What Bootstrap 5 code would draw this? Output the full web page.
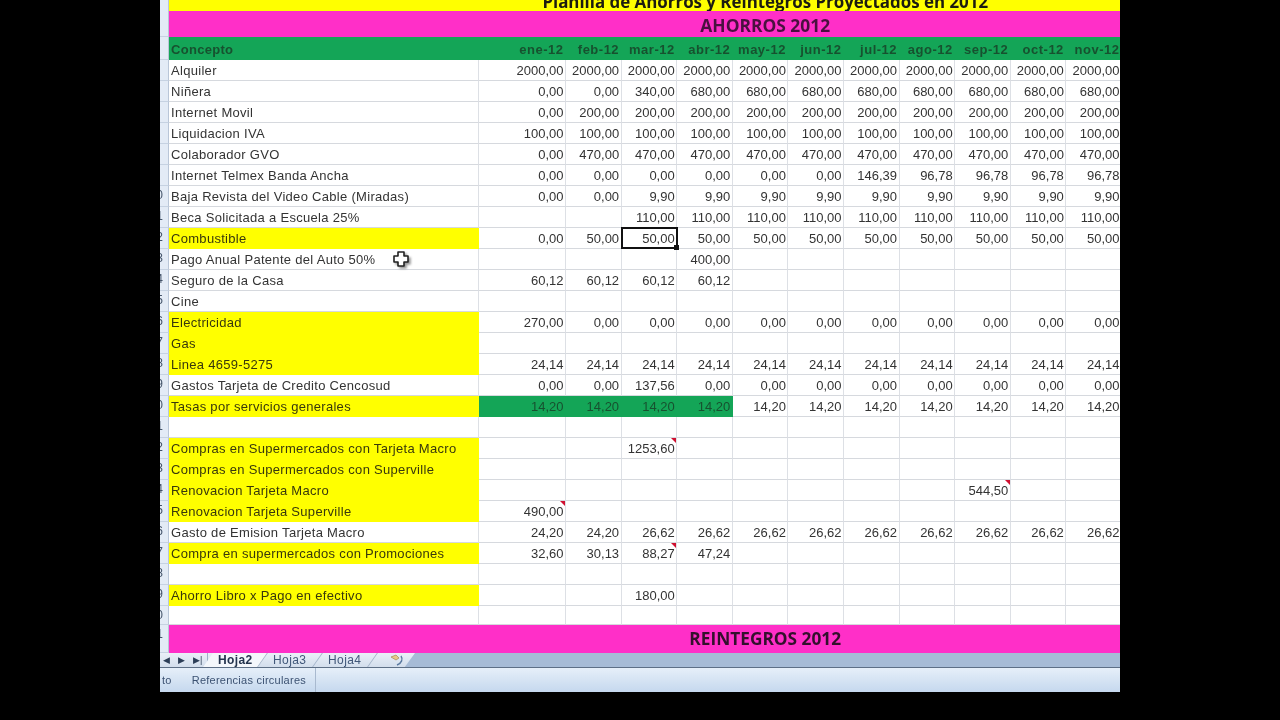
<!DOCTYPE html>
<html lang="es">
<head>
    <meta charset="UTF-8">
    <title>Planilla de Ahorros</title>
    <link href="https://cdn.jsdelivr.net/npm/bootstrap@5.3.0/dist/css/bootstrap.min.css" rel="stylesheet">
    <style>
        body { background: #000; overflow: hidden; }
        .sheet-wrap { width: 960px; height: 692px; overflow: hidden; filter: blur(.5px); background: #fff; }
        .sheet-table { width: 962px; table-layout: fixed; border-collapse: separate; border-spacing: 0; margin: 0; font: 13px "Liberation Sans", Arial, sans-serif; color: #333; }
        .sheet-table td { height: 21px; padding: 1px 1.5px 0 2px; border-right: 1px solid #dde0e5; border-bottom: 1px solid #d6d9de; line-height: 19px; text-align: right; white-space: nowrap; overflow: hidden; background: #fff; color: #333; }
        .sheet-table td.concept { text-align: left; padding-left: 2px; letter-spacing: .3px; }
        .sheet-table td.gutter { padding: 0; background: #e3ebf6; border-right: 1px solid #b9c6d8; border-bottom-color: #c6d2e2; color: #44546a; font-size: 12px; }
        .gutter-num { display: flex; justify-content: flex-end; width: 9px; padding-right: 6px; overflow: hidden; }
        .sheet-table td.fill-y { background: #ffff00; color: #38380c; border-color: #ffff00; }
        .sheet-table td.fill-g { background: #14a557; color: #17512f; border-color: #14a557; }
        .sheet-table td.fill-m { background: #ff2fc8; border-color: #ff2fc8; }
        .sheet-table .title-row td { height: 11px; line-height: 11px; border-bottom: 0; padding-top: 0; }
        .title-clip { height: 11px; overflow: hidden; }
        .title-text { display: block; margin-top: -7px; font: 700 16.9px/18px "Open Sans", "Liberation Sans", sans-serif; color: #1c1c10; padding-left: 240px; text-align: center; }
        .sheet-table .band-row td { height: 26px; padding-top: 0; }
        .sheet-table .foot-band td { height: 28px; padding-top: 0; }
        .band-text { padding: 4px 0 0 240px; text-align: center; font: 700 17.4px/20px "Open Sans", "Liberation Sans", sans-serif; color: #4a1040; }
        .foot-band .band-text { color: #33102c; font-size: 17.3px; }
        .sheet-table .head-row td { height: 23px; padding-top: 3px; font-weight: 700; letter-spacing: .5px; color: #17512f; }
        .sheet-table .head-row td.concept { letter-spacing: .3px; }
        .sheet-table .last-row td { height: 19px; line-height: 18px; padding-top: 0; }
        .cell-note { position: relative; overflow: visible !important; }
        .cell-note::after { content: ""; position: absolute; top: 0; right: 0; border-top: 5px solid #d01030; border-left: 5px solid transparent; }
        .cell-sel { position: relative; overflow: visible !important; }
        .sel-box { position: absolute; left: -1px; top: -1px; right: -2px; bottom: -1px; border: 2px solid #111; pointer-events: none; }
        .sel-box::after { content: ""; position: absolute; right: -3px; bottom: -3px; width: 5px; height: 5px; background: #111; }
        .xl-cursor { position: absolute; left: 232px; top: 250px; width: 18px; height: 18px; filter: drop-shadow(2px 2px 1px #999); }
        .tab-bar { height: 15px; background: #a6bbd6; border-bottom: 1px solid #5d6f86; font: 12px "Liberation Sans", Arial, sans-serif; }
        .tab-strip { width: 255px; height: 100%; background: linear-gradient(#eaf0f8, #d3deec); clip-path: polygon(0 0, 100% 0, 96% 100%, 0 100%); color: #41587a; }
        .tab-nav { width: 48px; color: #2c3e57; font-size: 9px; gap: 8px; padding-left: 3px; border-right: 1px solid #9fb1c8; }
        .sheet-tab { width: 55px; height: 100%; letter-spacing: .4px; border-right: 1px solid #a3b4ca; transform: skewX(-35deg); }
        .sheet-tab > span { transform: skewX(35deg); }
        .sheet-tab.is-active { background: #f4f7fb; font-weight: 700; color: #24344e; }
        .status-bar { height: 24px; background: linear-gradient(#e6eff9, #c5d8ee); color: #3c5272; font: 11px "Liberation Sans", Arial, sans-serif; letter-spacing: .25px; }
        .status-item { padding-right: 9px; border-right: 1px solid #a8b9cf; height: 100%; display: flex; align-items: center; }
        .status-tail { margin-left: 2px; margin-right: 20px; }
    </style>
</head>
<body class="m-0">
<div class="sheet-wrap mx-auto position-relative">
    <table class="table sheet-table" id="sheet">
        <colgroup id="cols"></colgroup>
        <tbody id="rows"></tbody>
    </table>

    <svg class="xl-cursor" viewBox="0 0 18 18">
        <path d="M6 2h6v4h4v6h-4v4H6v-4H2V6h4z" fill="#fff" stroke="#222" stroke-width="1.6" stroke-linejoin="round"/>
    </svg>

    <div class="tab-bar d-flex">
        <div class="tab-strip d-flex">
            <div class="tab-nav d-flex align-items-center"><span>&#9664;</span><span>&#9654;</span><span>&#9654;|</span></div>
            <div class="sheet-tab is-active d-flex align-items-center justify-content-center"><span>Hoja2</span></div>
            <div class="sheet-tab d-flex align-items-center justify-content-center"><span>Hoja3</span></div>
            <div class="sheet-tab d-flex align-items-center justify-content-center"><span>Hoja4</span></div>
            <div class="d-flex align-items-center ps-3">
                <svg width="16" height="13" viewBox="0 0 16 13"><path d="M2 3l5-2 3 3-3 2z" fill="#e8c98a" stroke="#a88a55" stroke-width=".7"/><path d="M12 2c2 3 1 7-4 9" fill="none" stroke="#5b7aa0" stroke-width="1.4"/></svg>
            </div>
        </div>
    </div>
    <div class="status-bar d-flex align-items-center">
        <div class="status-item"><span class="status-tail">to</span><span>Referencias circulares</span></div>
    </div>
</div>

<script>
    const months = ["ene-12","feb-12","mar-12","abr-12","may-12","jun-12","jul-12","ago-12","sep-12","oct-12","nov-12"];
    const same = (v) => Array(11).fill(v);
    const head = (list, v) => list.concat(Array(11 - list.length).fill(v));
    const only = (i, v) => { const a = Array(11).fill(""); a[i] = v; return a; };

    // concepto, amarillo, valores, celdas con comentario
    const data = [
        ["Alquiler", 0, same("2000,00")],
        ["Niñera", 0, head(["0,00","0,00","340,00"], "680,00")],
        ["Internet Movil", 0, head(["0,00"], "200,00")],
        ["Liquidacion IVA", 0, same("100,00")],
        ["Colaborador GVO", 0, head(["0,00"], "470,00")],
        ["Internet Telmex Banda Ancha", 0, head(["0,00","0,00","0,00","0,00","0,00","0,00","146,39"], "96,78")],
        ["Baja Revista del Video Cable (Miradas)", 0, head(["0,00","0,00"], "9,90")],
        ["Beca Solicitada a Escuela 25%", 0, head(["",""], "110,00")],
        ["Combustible", 1, head(["0,00"], "50,00")],
        ["Pago Anual Patente del Auto 50%", 0, only(3, "400,00")],
        ["Seguro de la Casa", 0, head(["60,12","60,12","60,12","60,12"], "")],
        ["Cine", 0, same("")],
        ["Electricidad", 1, head(["270,00"], "0,00")],
        ["Gas", 1, same("")],
        ["Linea 4659-5275", 1, same("24,14")],
        ["Gastos Tarjeta de Credito Cencosud", 0, head(["0,00","0,00","137,56"], "0,00")],
        ["Tasas por servicios generales", 1, same("14,20")],
        ["", 0, same("")],
        ["Compras en Supermercados con Tarjeta Macro", 1, only(2, "1253,60"), [2]],
        ["Compras en Supermercados con Superville", 1, same("")],
        ["Renovacion Tarjeta Macro", 1, only(8, "544,50"), [8]],
        ["Renovacion Tarjeta Superville", 1, only(0, "490,00"), [0]],
        ["Gasto de Emision Tarjeta Macro", 0, head(["24,20","24,20"], "26,62")],
        ["Compra en supermercados con Promociones", 1, head(["32,60","30,13","88,27","47,24"], ""), [2]],
        ["", 0, same("")],
        ["Ahorro Libro x Pago en efectivo", 1, only(2, "180,00")],
        ["", 0, same("")]
    ];

    const cols = document.getElementById("cols");
    [9, 310, 87].concat(Array(10).fill(55.6)).forEach((w) => {
        const c = document.createElement("col");
        c.style.width = w + "px";
        cols.appendChild(c);
    });

    const rows = document.getElementById("rows");
    const gutter = (n) => `<td class="gutter"><div class="gutter-num">${n >= 10 ? n % 10 : "&nbsp;"}</div></td>`;

    rows.insertAdjacentHTML("beforeend", `<tr class="title-row">${gutter(1)}<td colspan="12" class="fill-y"><div class="title-clip"><span class="title-text">Planilla de Ahorros y Reintegros Proyectados en 2012</span></div></td></tr>`);
    rows.insertAdjacentHTML("beforeend", `<tr class="band-row">${gutter(2)}<td colspan="12" class="fill-m"><div class="band-text">AHORROS 2012</div></td></tr>`);
    rows.insertAdjacentHTML("beforeend", `<tr class="head-row">${gutter(3)}<td class="concept fill-g">Concepto</td>${months.map((m) => `<td class="fill-g">${m}</td>`).join("")}</tr>`);

    data.forEach((r, i) => {
        const n = i + 4;
        const notes = r[3] || [];
        let html = `${gutter(n)}<td class="concept ${r[1] ? "fill-y" : ""}">${r[0]}</td>`;
        r[2].forEach((v, j) => {
            const cls = [];
            if (r[0].startsWith("Tasas") && j < 4) cls.push("fill-g");
            if (notes.includes(j)) cls.push("cell-note");
            const sel = r[0] === "Combustible" && j === 2;
            if (sel) cls.push("cell-sel");
            html += `<td class="${cls.join(" ")}">${v}${sel ? '<div class="sel-box"></div>' : ""}</td>`;
        });
        rows.insertAdjacentHTML("beforeend", `<tr class="${i === data.length - 1 ? "last-row" : ""}">${html}</tr>`);
    });

    rows.insertAdjacentHTML("beforeend", `<tr class="foot-band">${gutter(31)}<td colspan="12" class="fill-m"><div class="band-text">REINTEGROS 2012</div></td></tr>`);
</script>
<script src="https://cdn.jsdelivr.net/npm/bootstrap@5.3.0/dist/js/bootstrap.bundle.min.js"></script>
</body>
</html>
